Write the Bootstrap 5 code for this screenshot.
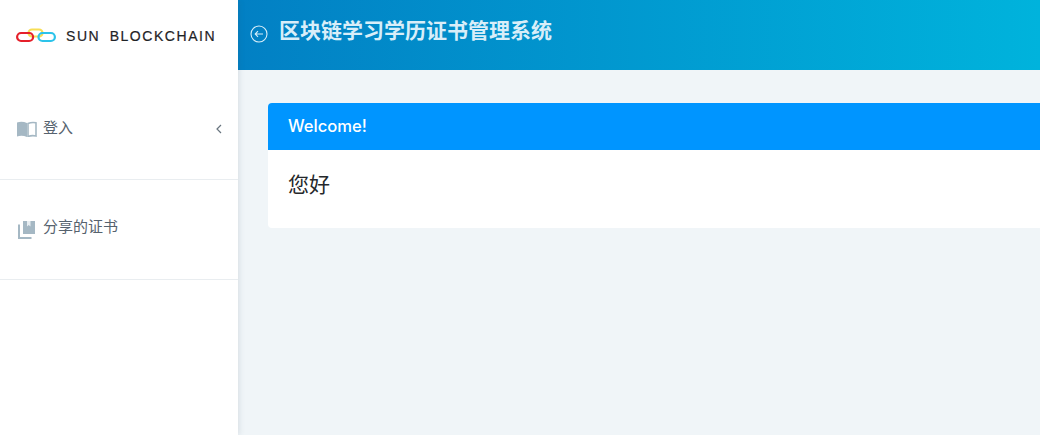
<!DOCTYPE html>
<html lang="zh">
<head>
    <meta charset="UTF-8">
    <meta name="viewport" content="width=device-width, initial-scale=1.0">
    <title>区块链学习学历证书管理系统</title>
    <link href="https://cdn.jsdelivr.net/npm/bootstrap@5.3.0/dist/css/bootstrap.min.css" rel="stylesheet">
    <style>
        html, body { height: 100%; overflow: hidden; }
        body { background: #f0f5f8; font-family: "Liberation Sans", "Noto Sans CJK SC", sans-serif; }
        .app-shell { height: 435px; width: 1040px; overflow: hidden; }
        .side-panel { width: 238px; flex: none; background: #fff; box-shadow: 1px 0 6px rgba(60, 80, 100, .14); z-index: 2; }
        .brand-box { height: 70px; padding-left: 16px; gap: 10px; }
        .brand-text { font-size: 14px; letter-spacing: 1.55px; color: #1f2326; word-spacing: 4px; white-space: nowrap; margin-top: 2px; -webkit-text-stroke: .2px #1f2326; }
        .menu-row { height: 100px; padding: 0 16px 0 17px; border-bottom: 1px solid #e9edf0; color: #56626e; font-size: 15px; }
        .menu-first { height: 110px; padding-top: 9px; }
        .menu-second { padding-top: 0; padding-bottom: 2px; }
        .menu-row svg { flex: none; }
        .menu-label { margin-left: 6px; margin-top: -2px; }
        .second-icon { margin-left: 1px; margin-right: 2px; margin-top: 2px; }
        .top-band { height: 70px; background: linear-gradient(90deg, #0280c4 0%, #00b3dc 100%); padding-left: 12px; gap: 11px; color: #d8eef9; }
        .top-title { font-size: 21px; font-weight: 700; margin: -8px 0 0; line-height: 1.5; }
        .back-icon { margin-top: -2px; }
        .work-area { padding: 33px 0 0 30px; }
        .hello-card { border: 0; border-radius: 4px 0 0 4px; width: 772px; margin-right: -2px; }
        .hello-head { background: #0095ff; color: #fff; font-family: Inter, "Liberation Sans", sans-serif; font-weight: 500; font-size: 16.6px; height: 47px; padding: 0 20px; border: 0; border-radius: 4px 0 0 0 !important; }
        .hello-body { height: 78px; padding: 20px 20px 0; font-size: 21px; color: #25282b; line-height: 1.4; }
    </style>
</head>
<body>
    <div class="app-shell d-flex">
        <div class="side-panel">
            <div class="brand-box d-flex align-items-center">
                <svg width="40" height="15" viewBox="0 0 40 15" fill="none" stroke-width="2.2">
                    <rect x="12.5" y="1.5" width="14" height="7" rx="3.5" stroke="#f7de55"/>
                    <rect x="1.1" y="5" width="16" height="8" rx="4" stroke="#e5202a"/>
                    <rect x="22.5" y="5" width="16.4" height="8" rx="4" stroke="#2cc3ea"/>
                </svg>
                <span class="brand-text">SUN BLOCKCHAIN</span>
            </div>
            <div class="menu-row menu-first d-flex align-items-center">
                <svg width="20" height="16" viewBox="0 0 20 16">
                    <path d="M0 1.5Q5 0 10 2V16Q5 14 0 15.5Z" fill="#a5b8c4"/>
                    <path d="M11 2.5Q15 0.8 19 1.8V15Q15 14 11 15.5Z" fill="#fff" stroke="#a5b8c4" stroke-width="1.6"/>
                </svg>
                <span class="menu-label flex-grow-1">登入</span>
                <svg width="6" height="10" viewBox="0 0 6 10" fill="none" stroke="#68757f" stroke-width="1.2"><path d="M5 1 1 5l4 4"/></svg>
            </div>
            <div class="menu-row menu-second d-flex align-items-center">
                <svg width="17" height="18" viewBox="0 0 17 18" class="second-icon">
                    <path d="M5 0h12v13H5z" fill="#a5b8c4"/>
                    <path d="M9 0h3.5v5.5L10.7 4 9 5.5z" fill="#e8eef2"/>
                    <path d="M1 3.5V17h12.5" fill="none" stroke="#a5b8c4" stroke-width="2"/>
                </svg>
                <span class="menu-label">分享的证书</span>
            </div>
        </div>
        <div class="flex-grow-1 d-flex flex-column">
            <div class="top-band d-flex align-items-center">
                <svg class="back-icon" width="18" height="18" viewBox="0 0 18 18" fill="none" stroke="#d8eef9" stroke-width="1.1">
                    <circle cx="9" cy="9" r="8"/>
                    <path d="M13 9H5.2M8 6.2 5.2 9 8 11.8"/>
                </svg>
                <h1 class="top-title">区块链学习学历证书管理系统</h1>
            </div>
            <div class="work-area flex-grow-1">
                <div class="card hello-card">
                    <div class="card-header hello-head d-flex align-items-center">Welcome!</div>
                    <div class="card-body hello-body">您好</div>
                </div>
            </div>
        </div>
    </div>
    <script src="https://cdn.jsdelivr.net/npm/bootstrap@5.3.0/dist/js/bootstrap.bundle.min.js"></script>
</body>
</html>
